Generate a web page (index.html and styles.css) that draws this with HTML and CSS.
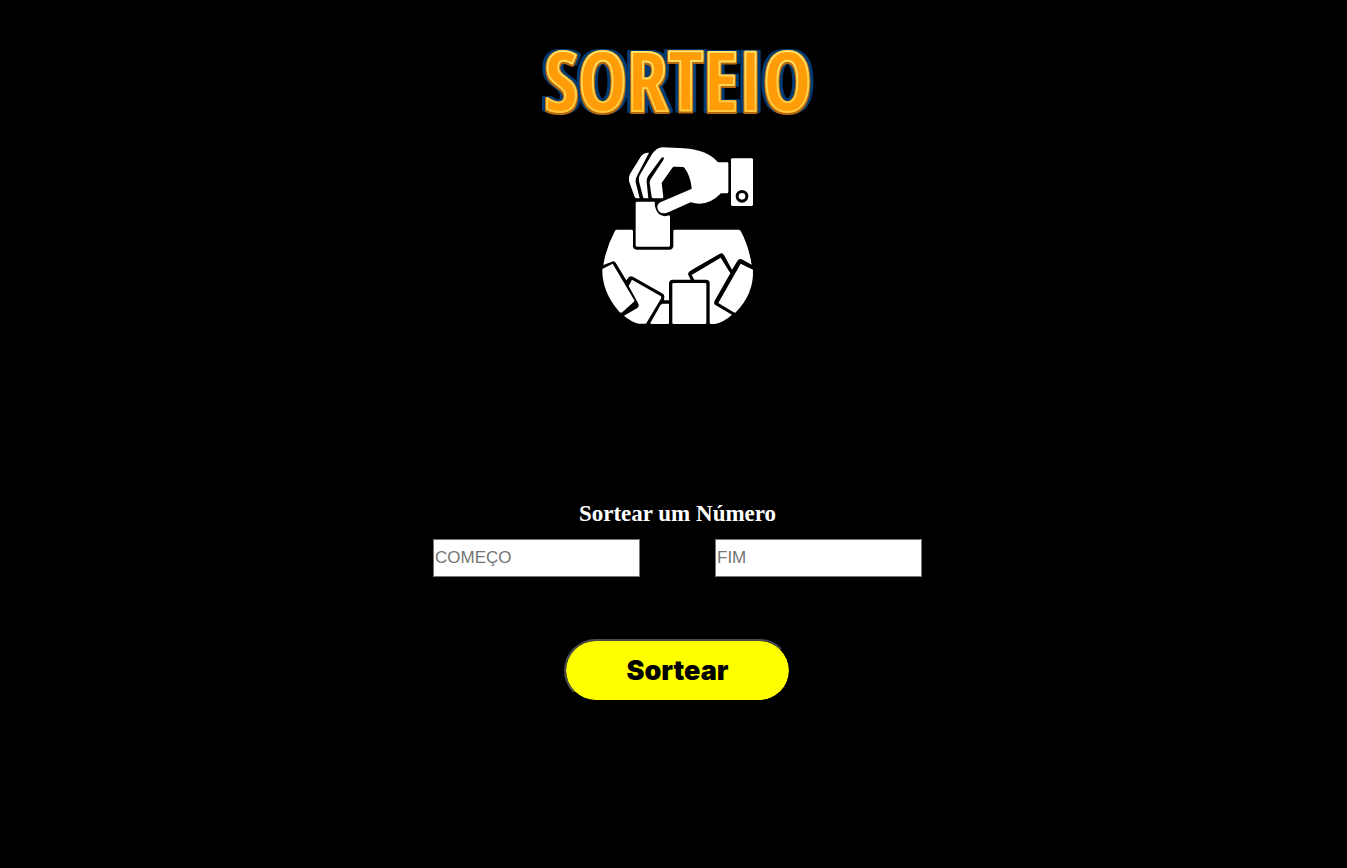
FILE: index.html
```html
<!DOCTYPE html>
<html lang="pt-BR">
<head>
<meta charset="utf-8">
<meta name="viewport" content="width=device-width, initial-scale=1">
<title>Sorteio</title>
<link rel="stylesheet" href="styles.css">
</head>
<body>
<main class="page">
  <h1 class="logo">
    <svg class="logo-art" viewBox="0 0 310 104">
      <defs>
        <linearGradient id="rim" x1="0" y1="0" x2="0" y2="1">
          <stop offset="0.2" stop-color="#ffe36b"/>
          <stop offset="0.8" stop-color="#ffc83c"/>
        </linearGradient>
        <filter id="depth" filterUnits="userSpaceOnUse" x="0" y="0" width="310" height="104" color-interpolation-filters="sRGB">
          <feMorphology in="SourceAlpha" operator="dilate" radius="4 1" result="wide"/>
          <feFlood flood-color="#003c74"/>
          <feComposite in2="wide" operator="in" result="blue"/>
          <feMorphology in="SourceAlpha" operator="dilate" radius="1" result="edge"/>
          <feOffset in="edge" dy="1" result="low"/>
          <feFlood flood-color="#b8680c"/>
          <feComposite in2="low" operator="in" result="brown"/>
          <feMerge>
            <feMergeNode in="blue"/>
            <feMergeNode in="brown"/>
            <feMergeNode in="SourceGraphic"/>
          </feMerge>
        </filter>
      </defs>
      <text class="logo-text" x="155" y="81" text-anchor="middle" filter="url(#depth)">SORTEIO</text>
    </svg>
  </h1>
  <svg class="bowl" viewBox="0 0 495 570" role="img" aria-label="Mão retirando um papel do pote">
    <g fill="#fff">
      <path d="M162 38Q146 37 137 50L105 102Q100 111 102 124L119 171Q121 175 126 175H134L122 127Q121 116 127 106Z"/>
      <path d="M186 27Q176 34 169 46L134 106Q130 114 132 124L144 171Q145 175 149 175H160L155 126Q154 117 159 109L199 54Q205 49 207 54L205 60L168 116Q163 122 164 130L170 171Q171 175 176 175H203L205 170L200 129L232 83Q236 79 242 80L263 81Q267 81 269 85Q285 105 290 143L289 147L196 187Q184 194 188 207Q193 221 208 220Q213 220 220 217L287 187Q338 202 378 160H398L400 156V70L398 67H369Q338 30 266 25L203 22Q194 22 186 27Z"/>
      <path fill-rule="evenodd" d="M411 55H471L474 58V195L471 198H411L408 195V58ZM441 150A19 19 0 1 0 441 188A19 19 0 1 0 441 150Z"/>
      <circle cx="441" cy="169" r="10"/>
      <path d="M125 185H179Q179 210 193 223Q205 232 223 226L225 230V317L222 320H125L122 317V188Z"/>
      <path d="M64 269H111L114 272V319Q115 329 125 329H225Q234 328 235 319V272L238 269H433L437 273Q461 317 470 374L440 358Q432 355 427 363L411 389L387 345Q382 337 373 342L286 392Q276 399 281 407L287 419H231Q222 421 222 430V481H207L208 470Q209 464 201 460L115 411Q105 405 100 413L94 421L62 368Q58 360 49 366L25 375Q33 323 60 272Z"/>
      <path d="M53 371L118 481L116 486L80 518L74 517Q20 455 22 387Z"/>
      <path d="M111 419L198 469L199 474L153 551H131Q106 544 87 527L127 504Q134 498 129 489L101 438Z"/>
      <path d="M197 494L203 491H222V549L220 552H169L166 549Z"/>
      <rect x="232" y="429" width="102" height="123" rx="4"/>
      <path d="M377 353L406 400L359 482Q355 490 361 495L411 524Q387 546 360 552H347L344 549V427Q343 420 334 419H298L290 405Z"/>
      <path d="M437 371L474 389Q477 462 421 518L416 517L370 489Z"/>
    </g>
  </svg>
  <form class="draw">
    <h2 class="title">Sortear um Número</h2>
    <div class="fields">
      <input class="field" type="text" placeholder="COMEÇO" aria-label="Começo">
      <input class="field" type="text" placeholder="FIM" aria-label="Fim">
    </div>
    <button class="submit" type="button">Sortear</button>
  </form>
</main>
</body>
</html>
```
FILE: styles.css
```css
* {
  box-sizing: border-box;
}

body {
  margin: 0;
  background: #000;
  color: #fff;
  font-family: "Liberation Serif", "Times New Roman", serif;
}

.page {
  display: flex;
  flex-direction: column;
  align-items: center;
  padding: 30px 0 40px 8px;
}

.logo {
  margin: 0;
}

.logo-art {
  display: block;
  width: 310px;
  height: 104px;
}

.logo-text {
  font-family: "Noto Sans ExtraCondensed", "Open Sans Condensed", "Roboto Condensed", "Liberation Sans Narrow", sans-serif;
  font-size: 82px;
  font-weight: 700;
  fill: #ff9c08;
  stroke: url(#rim);
  stroke-width: 2px;
  stroke-linejoin: round;
}

.bowl {
  width: 165px;
  height: 190px;
  margin-top: 6px;
}

.draw {
  display: flex;
  flex-direction: column;
  align-items: center;
  margin-top: 170px;
}

.title {
  margin: 0;
  font-size: 23px;
  line-height: 28px;
  font-weight: 700;
}

.fields {
  display: flex;
  flex-wrap: wrap;
  justify-content: center;
  gap: 20px 75px;
  margin-top: 11px;
}

.field {
  width: 207px;
  height: 38px;
  padding: 1px;
  border: 1px solid #767676;
  background: #fff;
  color: #000;
  font: 17px "Liberation Sans", Arial, sans-serif;
}

.field::placeholder {
  color: #757575;
}

.submit {
  margin-top: 62px;
  width: 227px;
  height: 63px;
  border: 2px solid;
  border-color: #4c4c4c #000 #000 #4c4c4c;
  border-radius: 32px;
  background: #ff0;
  background-clip: padding-box;
  color: #000;
  font: 900 27px Inter, "Liberation Sans", sans-serif;
  cursor: pointer;
}
```
